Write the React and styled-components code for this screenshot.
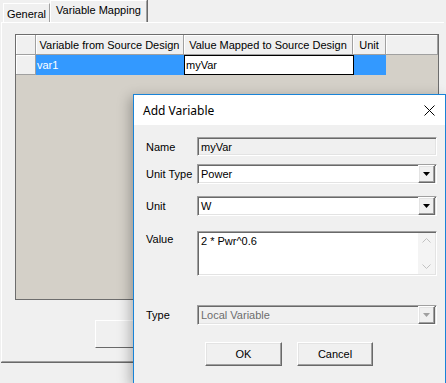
import React from 'react';
import styled, { createGlobalStyle, css } from 'styled-components';

const GlobalStyle = createGlobalStyle`
  html, body {
    margin: 0;
    padding: 0;
    background: #f0f0f0;
  }
  body {
    font-family: "Liberation Sans", Arial, sans-serif;
    font-size: 11px;
    color: #000;
  }
`;

const sunken = css`
  border-top: 1px solid #a0a0a0;
  border-left: 1px solid #a0a0a0;
  border-bottom: 1px solid #fff;
  border-right: 1px solid #fff;
  box-shadow: inset 1px 1px 0 #696969, inset -1px -1px 0 #e3e3e3;
`;

const raised = css`
  border-top: 1px solid #fff;
  border-left: 1px solid #fff;
  border-bottom: 1px solid #696969;
  border-right: 1px solid #696969;
  box-shadow: inset -1px -1px 0 #a0a0a0, inset 1px 1px 0 #e3e3e3;
`;

const Screen = styled.div`
  position: relative;
  width: 446px;
  height: 383px;
  overflow: hidden;
  background: #f0f0f0;
  display: flex;
  flex-direction: column;
`;

const TabStrip = styled.div`
  display: flex;
  align-items: flex-end;
  height: 22px;
  padding-left: 3px;
  box-sizing: border-box;
`;

const Tab = styled.div`
  box-sizing: border-box;
  width: ${p => p.$width}px;
  height: ${p => (p.$active ? 22 : 19)}px;
  display: flex;
  align-items: center;
  justify-content: center;
  border-top: 1px solid #fff;
  border-left: 1px solid #fff;
  border-right: 1px solid #a0a0a0;
  box-shadow: ${p => (p.$active ? '1px 0 0 #696969' : 'none')};
  padding-top: ${p => (p.$active ? 0 : 1)}px;
  padding-bottom: ${p => (p.$active ? 3 : 0)}px;
  font-size: 11px;
  background: #f0f0f0;
  position: relative;
  z-index: ${p => (p.$active ? 1 : 0)};
`;

const TabPage = styled.div`
  box-sizing: border-box;
  margin-left: 1px;
  width: 443px;
  height: 340px;
  border-top: 1px solid #fff;
  border-left: 1px solid #fff;
  border-bottom: 1px solid #a0a0a0;
  box-shadow: 0 1px 0 #696969;
  padding: 11px 0 0 13px;
  display: flex;
  flex-direction: column;
`;

const DataGrid = styled.div`
  box-sizing: border-box;
  width: 424px;
  height: 266px;
  border: 1px solid #6d6d6d;
  background: #d4d0c8;
  display: flex;
  flex-direction: column;
`;

const GridRow = styled.div`
  display: flex;
  height: 20px;
`;

const HeaderCell = styled.div`
  box-sizing: border-box;
  width: ${p => p.$width}px;
  flex: ${p => (p.$grow ? 1 : 'none')};
  height: 20px;
  background: #f0f0f0;
  border-right: 1px solid #a0a0a0;
  border-bottom: 1px solid #a0a0a0;
  box-shadow: inset 1px 1px 0 #fff;
  display: flex;
  align-items: center;
  justify-content: center;
  white-space: nowrap;
  padding-top: 1px;
`;

const Cell = styled.div`
  box-sizing: border-box;
  width: ${p => p.$width}px;
  height: 20px;
  display: flex;
  align-items: center;
  padding-left: 1px;
  background: ${p => (p.$selected ? '#3399ff' : '#fff')};
  color: ${p => (p.$selected ? '#fff' : '#000')};
  border-right: ${p => (p.$selected ? '1px solid #3399ff' : 'none')};
`;

const EditCell = styled.div`
  box-sizing: border-box;
  width: ${p => p.$width}px;
  height: 20px;
  border: 1px solid #000;
  background: #fff;
  display: flex;
  align-items: center;
  padding-left: 1px;
`;

const GhostButton = styled.div`
  box-sizing: border-box;
  width: 120px;
  height: 28px;
  margin: 20px 0 0 80px;
  background: #f0f0f0;
  border-top: 1px solid #fff;
  border-left: 1px solid #fff;
  border-bottom: 1px solid #696969;
`;

const Dialog = styled.div`
  position: absolute;
  left: 133px;
  top: 94px;
  width: 313px;
  height: 290px;
  box-sizing: border-box;
  border: 1px solid #1883d7;
  background: #f0f0f0;
  box-shadow: -3px 3px 12px rgba(0, 0, 0, 0.28);
  display: flex;
  flex-direction: column;
`;

const TitleBar = styled.div`
  height: 30px;
  flex: none;
  background: #fff;
  display: flex;
  align-items: center;
  justify-content: space-between;
  padding: 0 10px 0 9px;
  font-family: "Noto Sans", "Open Sans", sans-serif;
  font-size: 12px;
`;

const Body = styled.div`
  display: flex;
  flex-direction: column;
  padding: 12px 0 0 12px;
`;

const FieldRow = styled.div`
  display: flex;
  align-items: ${p => (p.$top ? 'flex-start' : 'center')};
  margin-top: ${p => p.$gap || 0}px;
`;

const Label = styled.div`
  width: 51px;
  flex: none;
  white-space: nowrap;
  padding-top: ${p => (p.$top ? 2 : 0)}px;
`;

const TextBox = styled.div`
  ${sunken};
  box-sizing: border-box;
  width: 240px;
  height: ${p => p.$height || 20}px;
  background: ${p => (p.$disabled ? '#f0f0f0' : '#fff')};
  color: ${p => (p.$muted ? '#6d6d6d' : '#000')};
  display: flex;
  align-items: ${p => (p.$multi ? 'stretch' : 'center')};
  padding-left: 3px;
`;

const BoxText = styled.div`
  flex: 1;
  padding-top: ${p => (p.$multi ? 3 : 0)}px;
`;

const DropButton = styled.div`
  ${raised};
  box-sizing: border-box;
  width: 17px;
  height: 100%;
  margin: 1px 1px 1px 0;
  background: #f0f0f0;
  display: flex;
  align-items: center;
  justify-content: center;
`;

const ScrollBar = styled.div`
  width: 17px;
  margin: 1px 1px 1px 0;
  background: #f4f4f4;
  display: flex;
  flex-direction: column;
  justify-content: space-between;
  align-items: center;
  padding: 5px 0;
  box-sizing: border-box;
`;

const ButtonRow = styled.div`
  display: flex;
  gap: 15px;
  margin: 17px 0 0 59px;
`;

const PushButton = styled.div`
  ${raised};
  box-sizing: border-box;
  width: ${p => p.$width}px;
  height: 24px;
  background: #f0f0f0;
  display: flex;
  align-items: center;
  justify-content: center;
`;

function Arrow({ color = '#000' }) {
  return (
    <svg width="7" height="4" viewBox="0 0 7 4">
      <polygon points="0,0 7,0 3.5,4" fill={color} />
    </svg>
  );
}

function Chevron({ up }) {
  return (
    <svg width="9" height="5" viewBox="0 0 9 5">
      <polyline
        points={up ? '0.5,4.5 4.5,0.5 8.5,4.5' : '0.5,0.5 4.5,4.5 8.5,0.5'}
        fill="none"
        stroke="#c2c2c2"
        strokeWidth="1"
      />
    </svg>
  );
}

function CloseIcon() {
  return (
    <svg width="11" height="11" viewBox="0 0 11 11">
      <path d="M0.5 0.5 L10.5 10.5 M10.5 0.5 L0.5 10.5" stroke="#000" strokeWidth="1" />
    </svg>
  );
}

function Combo({ value, disabled }) {
  return (
    <TextBox $disabled={disabled} $muted={disabled}>
      <BoxText>{value}</BoxText>
      <DropButton>
        <Arrow color={disabled ? '#a0a0a0' : '#000'} />
      </DropButton>
    </TextBox>
  );
}

export default function App() {
  return (
    <>
      <GlobalStyle />
      <Screen>
        <TabStrip>
          <Tab $width={47}>General</Tab>
          <Tab $width={97} $active>Variable Mapping</Tab>
        </TabStrip>
        <TabPage>
          <DataGrid>
            <GridRow>
              <HeaderCell $width={20} />
              <HeaderCell $width={148}>Variable from Source Design</HeaderCell>
              <HeaderCell $width={169}>Value Mapped to Source Design</HeaderCell>
              <HeaderCell $width={33}>Unit</HeaderCell>
              <HeaderCell $grow />
            </GridRow>
            <GridRow>
              <HeaderCell $width={20} />
              <Cell $width={148} $selected>var1</Cell>
              <EditCell $width={170}>myVar</EditCell>
              <Cell $width={32} $selected />
            </GridRow>
          </DataGrid>
          <GhostButton />
        </TabPage>

        <Dialog>
          <TitleBar>
            <span>Add Variable</span>
            <CloseIcon />
          </TitleBar>
          <Body>
            <FieldRow>
              <Label>Name</Label>
              <TextBox $disabled $height={19}>
                <BoxText>myVar</BoxText>
              </TextBox>
            </FieldRow>
            <FieldRow $gap={8}>
              <Label>Unit Type</Label>
              <Combo value="Power" />
            </FieldRow>
            <FieldRow $gap={12}>
              <Label>Unit</Label>
              <Combo value="W" />
            </FieldRow>
            <FieldRow $gap={15} $top>
              <Label $top>Value</Label>
              <TextBox $height={45} $multi>
                <BoxText $multi>2 * Pwr^0.6</BoxText>
                <ScrollBar>
                  <Chevron up />
                  <Chevron />
                </ScrollBar>
              </TextBox>
            </FieldRow>
            <FieldRow $gap={29}>
              <Label>Type</Label>
              <Combo value="Local Variable" disabled />
            </FieldRow>
            <ButtonRow>
              <PushButton $width={77}>OK</PushButton>
              <PushButton $width={76}>Cancel</PushButton>
            </ButtonRow>
          </Body>
        </Dialog>
      </Screen>
    </>
  );
}
